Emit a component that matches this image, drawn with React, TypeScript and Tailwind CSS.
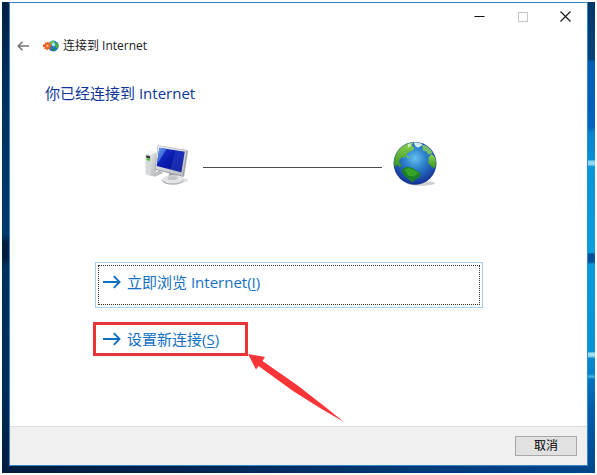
import { ReactNode } from 'react';
import { clsx } from 'clsx';

const FONT = "font-['Open_Sans','Noto_Sans_CJK_SC',sans-serif]";

function ComputerIcon() {
   return (
      <svg viewBox="45 30 132 135" className="h-[45px] w-11 shrink-0" aria-hidden="true">
         <defs>
            <linearGradient id="screen" x1="0" y1="0" x2="1" y2="1">
               <stop offset="0" stopColor="#1c3ad2" />
               <stop offset="0.45" stopColor="#0a1cae" />
               <stop offset="1" stopColor="#050e86" />
            </linearGradient>
            <linearGradient id="shine" x1="0" y1="0" x2="1" y2="1">
               <stop offset="0" stopColor="#6da6f2" />
               <stop offset="1" stopColor="#1733c4" />
            </linearGradient>
            <linearGradient id="metal" x1="0" y1="0" x2="1" y2="1">
               <stop offset="0" stopColor="#f2f3f4" />
               <stop offset="1" stopColor="#b4b8bc" />
            </linearGradient>
         </defs>
         <ellipse cx="142" cy="148" rx="33" ry="9" fill="#e3e3e3" />
         <path d="M47 69 62 60 78 64 78 129 63 135 47 129Z" fill="url(#metal)" />
         <path d="M47 69 62 72 62 135 47 129Z" fill="#d6d8da" />
         <path d="M47 69 62 60 78 64 62 72Z" fill="#f6f6f6" />
         <path d="M49 73 60 76 60 83 49 80Z" fill="#28322c" />
         <path d="M49 82 60 85 60 90 49 87Z" fill="#4fc02c" />
         <path d="M62 130 88 118 100 123 70 137Z" fill="#e5e6e8" />
         <path d="M64 131 90 121M68 134 95 123M73 136 98 125" stroke="#8e9297" strokeWidth="2" />
         <path d="M118 126 140 130 142 144 114 142Z" fill="#9a9ea3" />
         <ellipse cx="128" cy="148" rx="32" ry="13" fill="#adb0b4" />
         <ellipse cx="128" cy="145" rx="31" ry="12" fill="#e4e5e7" />
         <ellipse cx="128" cy="141" rx="16" ry="6" fill="#c3c6c9" />
         <path d="M83 43 170 57 174 60 162 137 157 137 76 116 75 111Z" fill="#9fa3a8" />
         <path d="M84 44 170 58 158 134 77 113Z" fill="url(#metal)" />
         <path d="M88 50 164 62 154 124 80 105Z" fill="url(#screen)" />
         <path d="M88 50 110 54 84 95 81 98Z" fill="url(#shine)" />
         <path d="M137 58 164 62 154 124 121 115Z" fill="#4c6df0" opacity="0.25" />
      </svg>
   );
}

function GlobeIcon() {
   return (
      <svg viewBox="36 33 135 135" className="size-[45px] shrink-0" aria-hidden="true">
         <defs>
            <radialGradient id="ocean" cx="0.5" cy="0.38" r="0.62">
               <stop offset="0" stopColor="#62c2ee" />
               <stop offset="0.4" stopColor="#2c82cd" />
               <stop offset="1" stopColor="#152f94" />
            </radialGradient>
            <linearGradient id="land" x1="0" y1="0" x2="0" y2="1">
               <stop offset="0" stopColor="#8ed456" />
               <stop offset="1" stopColor="#35951d" />
            </linearGradient>
            <clipPath id="disc">
               <circle cx="105" cy="100" r="64" />
            </clipPath>
         </defs>
         <ellipse cx="122" cy="160" rx="43" ry="7" fill="#cfcfcf" />
         <circle cx="105" cy="100" r="64" fill="url(#ocean)" />
         <g clipPath="url(#disc)">
            <path
               d="M38 92 45 66 60 47 82 37 100 38 95 46 103 54 98 62 87 65 79 74 73 84 66 81 59 88 57 97 65 105 61 111 51 104 46 112Z"
               fill="url(#land)"
            />
            <path d="M100 35 119 37 128 45 114 53 106 49Z" fill="#d3e9ee" />
            <path d="M84 42 94 39 92 49 84 53Z" fill="#c8efb0" />
            <path d="M126 46 139 46 153 60 158 70 145 74 138 64 130 63Z" fill="#78bd68" />
            <path d="M146 81 155 72 164 80 171 96 164 115 156 112 145 99Z" fill="url(#land)" />
            <path d="M69 115 84 110 101 116 121 128 120 141 106 148 97 158 84 146 71 134 65 122Z" fill="#1c8126" />
            <path d="M73 118 87 114 103 120 116 130 102 139 86 138Z" fill="#36a226" />
            <path d="M77 76 84 77 89 83 83 84Z" fill="#7acb4a" />
         </g>
         <circle cx="105" cy="100" r="63" fill="none" stroke="#1b3a94" strokeOpacity="0.5" strokeWidth="2" />
      </svg>
   );
}

function ConnectIcon() {
   return (
      <svg viewBox="0 0 16 12" className="h-3 w-4 shrink-0" aria-hidden="true">
         <circle cx="10.3" cy="6" r="5.4" fill="#1c72c2" />
         <path d="M6 2.8 9 .8 12 1 10.8 3.2 8.7 4 8 6 6.5 6Z" fill="#6cc25a" />
         <path d="M12.4 2 14.6 3.5 15.5 6 14.5 8.7 12.6 7.4 12 5Z" fill="#49ab35" />
         <path d="M9 8.6 12 9 11 11 9 11Z" fill="#2c9140" />
         <ellipse cx="10.5" cy="4.6" rx="1.7" ry="2" fill="#a4e2f8" />
         <path
            d="M0 4.6 1.8 4.4 1.7 2.2 3.6 2.8 5 1.6 5.8 3 8 2.8 7.4 4.8 8.8 6 7.2 7.4 7.4 9.6 5.4 9 4 10.6 3.1 9 1.2 9.2 1.8 7.4 0 7Z"
            fill="#e5652c"
         />
         <circle cx="4.4" cy="6" r="1.2" fill="#f9b27a" />
      </svg>
   );
}

function CommandArrow() {
   return (
      <svg viewBox="0 0 18 14" className="h-3.5 w-[18px] shrink-0" fill="none" stroke="#0b6fc4" strokeWidth="1.8" aria-hidden="true">
         <path d="M0 7H16.5M10.8 1.2 16.6 7 10.8 12.8" />
      </svg>
   );
}

interface CommandLinkProps {
   accessKey: string;
   focused?: boolean;
   children: ReactNode;
}

function CommandLink({ accessKey, focused, children }: CommandLinkProps) {
   return (
      <button
         type="button"
         className={clsx(
            'w-full border p-0.5 text-left text-[15px] leading-5 text-[#1270c4]',
            focused ? 'border-[#a3cdee]' : 'border-transparent'
         )}
      >
         <span
            className={clsx(
               'flex items-center gap-1.5 border border-dotted pl-1',
               focused ? 'h-10 border-[#333] pb-1.5' : 'h-7 border-transparent'
            )}
         >
            <CommandArrow />
            <span>
               {children}(<u className="underline-offset-2">{accessKey}</u>)
            </span>
         </span>
      </button>
   );
}

export default function App() {
   return (
      <div className={clsx('flex min-h-screen bg-white p-0.5', FONT)}>
         <div className="flex flex-1 flex-col">
            <div className="flex flex-1">
               {/* Desktop wallpaper, left edge */}
               <div className="w-[7px] bg-[linear-gradient(#001f42_0%,#002f5d_18%,#003a6b_50%,#001c3e_52%,#001c3e_55%,#00305c_57%,#002c59_82%,#001d40_100%)]" />

               <section className="flex min-w-0 flex-1 flex-col border border-[#3585c4] bg-white">
                  <div className="flex h-[26px] items-center justify-end gap-8 pr-4 text-[#111]">
                     <button type="button" aria-label="最小化">
                        <svg viewBox="0 0 11 11" className="size-[11px]" stroke="currentColor" strokeWidth="1">
                           <path d="M.5 5.5H10.5" />
                        </svg>
                     </button>
                     <button type="button" aria-label="最大化" disabled className="text-[#c4c4c4]">
                        <svg viewBox="0 0 11 11" className="size-[11px]" fill="none" stroke="currentColor">
                           <rect x="1.5" y="1.5" width="9" height="9" />
                        </svg>
                     </button>
                     <button type="button" aria-label="关闭">
                        <svg viewBox="0 0 11 11" className="size-[11px]" stroke="currentColor" strokeWidth="1.1">
                           <path d="M.5.5 10.5 10.5M10.5.5.5 10.5" />
                        </svg>
                     </button>
                  </div>

                  <header className="flex h-[34px] items-center pl-[7px]">
                     <button type="button" aria-label="返回">
                        <svg viewBox="0 0 12 10" className="h-2.5 w-3" fill="none" stroke="#757575" strokeWidth="1.6">
                           <path d="M12 5H1.2M5.5.7 1.2 5 5.5 9.3" />
                        </svg>
                     </button>
                     <div className="ml-3.5 flex items-center gap-1 text-xs text-[#222]">
                        <ConnectIcon />
                        <span>连接到 Internet</span>
                     </div>
                  </header>

                  <main className="flex-1">
                     <h1 className="mt-[18px] pl-[35px] text-[15px] leading-6 text-[#0b3596]">你已经连接到 Internet</h1>

                     <div className="mt-9 flex items-center pr-[150px] pl-[135px]">
                        <ComputerIcon />
                        <div className="mt-2 mr-2.5 ml-3.5 h-px flex-1 bg-[#4a4a4a]" />
                        <GlobeIcon />
                     </div>

                     <div className="mt-[76px] pr-[104px] pl-[85px]">
                        <CommandLink accessKey="I" focused>
                           立即浏览 Internet
                        </CommandLink>
                        <div className="relative mt-3.5">
                           <CommandLink accessKey="S">设置新连接</CommandLink>
                           {/* Red marker and pointer */}
                           <div className="pointer-events-none absolute top-0 -left-0.5 h-[34px] w-[155px] border-3 border-[#e93336]" />
                           <svg
                              viewBox="0 0 96 68"
                              className="pointer-events-none absolute top-8 left-[153px] h-[68px] w-24"
                              aria-hidden="true"
                           >
                              <path d="M0 0 17 3 14.5 7 49 31 76 52 96 68 72 54 45 37 10.5 12 8 15.5Z" fill="#fa3437" />
                           </svg>
                        </div>
                     </div>
                  </main>

                  <footer className="flex h-[39px] items-center justify-end border-t border-[#dcdcdc] bg-[#f0f0f0] pr-2.5">
                     <button
                        type="button"
                        className="h-5 w-[62px] border border-[#a8a8a8] bg-[#e1e1e1] text-xs leading-4 text-black"
                     >
                        取消
                     </button>
                  </footer>
               </section>

               {/* Desktop wallpaper, right edge */}
               <div className="w-[7px] bg-[linear-gradient(#003769_0%,#00447c_12.4%,#005fb5_12.9%,#0063bd_27%,#0784cf_28%,#0690d6_34%,#8fd9ef_34.3%,#8fd9ef_35%,#0895da_35.5%,#079fdc_54%,#00509a_54.3%,#00509a_56%,#059cdb_56.5%,#0493d4_75.3%,#9be0ec_75.7%,#9be0ec_76.3%,#0588d0_76.8%,#0483cc_80.2%,#48b5e0_80.7%,#0074c2_81.3%,#005dab_88%,#004a92_100%)]" />
            </div>

            {/* Desktop wallpaper, bottom edge */}
            <div className="h-[7px] bg-[linear-gradient(90deg,#001c40_0%,#002450_30%,#003a78_70%,#00468c_100%)]" />
         </div>
      </div>
   );
}
